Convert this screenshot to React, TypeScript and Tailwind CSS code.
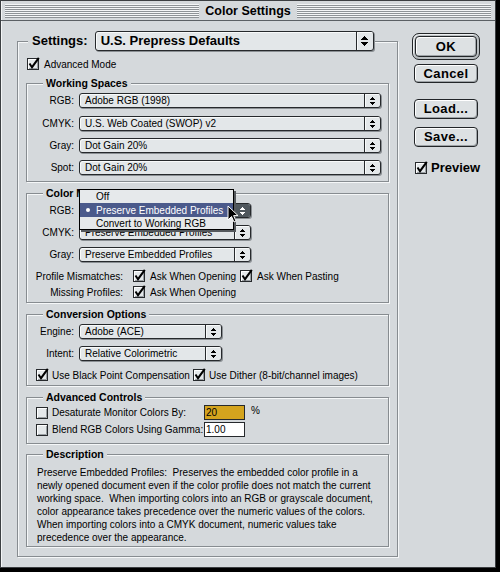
import React from "react";

// Mac OS 9 "Color Settings" dialog

function Arrows({ big = false, inverted = false }: { big?: boolean; inverted?: boolean }) {
  const c = inverted ? "#ffffff" : "#000000";
  if (big) {
    return (
      <svg width="7" height="10" viewBox="0 0 7 10" shapeRendering="crispEdges">
        <rect x="3" y="0" width="1" height="1" fill={c} />
        <rect x="2" y="1" width="3" height="1" fill={c} />
        <rect x="1" y="2" width="5" height="1" fill={c} />
        <rect x="0" y="3" width="7" height="1" fill={c} />
        <rect x="0" y="6" width="7" height="1" fill={c} />
        <rect x="1" y="7" width="5" height="1" fill={c} />
        <rect x="2" y="8" width="3" height="1" fill={c} />
        <rect x="3" y="9" width="1" height="1" fill={c} />
      </svg>
    );
  }
  return (
    <svg width="5" height="8" viewBox="0 0 5 8" shapeRendering="crispEdges">
      <rect x="2" y="0" width="1" height="1" fill={c} />
      <rect x="1" y="1" width="3" height="1" fill={c} />
      <rect x="0" y="2" width="5" height="1" fill={c} />
      <rect x="0" y="5" width="5" height="1" fill={c} />
      <rect x="1" y="6" width="3" height="1" fill={c} />
      <rect x="2" y="7" width="1" height="1" fill={c} />
    </svg>
  );
}

function Popup({
  text,
  className,
  big = false,
  pressed = false,
}: {
  text: string;
  className: string;
  big?: boolean;
  pressed?: boolean;
}) {
  return (
    <div
      className={`flex shrink-0 rounded-[3px] border border-[#26292c] bg-[#e3e7e9] shadow-[1px_1px_0_#8a8f93,inset_1px_1px_0_#f8fafa] ${className}`}
    >
      <div
        className={`flex-1 flex items-center whitespace-nowrap overflow-hidden ${
          big ? "pl-[5px] text-[13px] font-bold" : "pl-[5px] text-[10px]"
        }`}
      >
        {text}
      </div>
      <div
        className={`flex items-center justify-center border-l border-[#26292c] rounded-r-[2px] ${
          big ? "w-[17px]" : "w-[16px]"
        } ${pressed ? "bg-[#4f575d]" : "shadow-[inset_1px_1px_0_#f8fafa]"}`}
      >
        <Arrows big={big} inverted={pressed} />
      </div>
    </div>
  );
}

function Check({ checked = false }: { checked?: boolean }) {
  return (
    <svg width="14" height="14" viewBox="0 0 14 14" className="shrink-0">
      <rect x="0.5" y="1.5" width="11" height="11" fill="#e4e8ea" stroke="#26292c" />
      <path d="M1.5 12 V2.5 H10.5" stroke="#ffffff" fill="none" />
      <path d="M10.5 3 V11.5 H2" stroke="#9a9fa3" fill="none" />
      {checked && (
        <path d="M2.5 6.5 L5 10.2 L11.8 0.8" stroke="#000000" strokeWidth="2" fill="none" />
      )}
    </svg>
  );
}

function Group({
  label,
  className,
  children,
}: {
  label: string;
  className: string;
  children: React.ReactNode;
}) {
  return (
    <div
      className={`relative flex flex-col w-[363px] shrink-0 border border-[#878c90] shadow-[inset_1px_1px_0_#f5f7f8,1px_1px_0_#f5f7f8] ${className}`}
    >
      <div className="-mt-[7px] ml-[16px] self-start h-[13px] px-[3px] bg-[#d5d9dc] text-[10.5px] font-bold leading-[13px] whitespace-nowrap">
        {label}
      </div>
      {children}
    </div>
  );
}

function Row({ label, children, className = "" }: { label: string; children: React.ReactNode; className?: string }) {
  return (
    <div className={`flex items-center h-[15px] ${className}`}>
      <div className="w-[47px] mr-[5px] text-right text-[10px] whitespace-nowrap">{label}</div>
      {children}
    </div>
  );
}

function Button({ label, className = "" }: { label: string; className?: string }) {
  return (
    <div
      className={`flex items-center justify-center rounded-[4px] border border-[#222528] bg-[#dde1e3] shadow-[inset_1px_1px_0_#ffffff,inset_-1px_-1px_0_#9ea3a7] text-[13px] font-bold tracking-[0.4px] ${className}`}
    >
      {label}
    </div>
  );
}

function Cursor() {
  return (
    <svg width="12" height="19" viewBox="0 0 12 19" className="absolute left-[148px] top-[2px] z-20">
      <path
        d="M1 1 L1 15 L4.5 11.5 L7 17 L9 16 L6.6 10.6 L11 10.6 Z"
        fill="#000000"
        stroke="#ffffff"
        strokeWidth="1"
        strokeLinejoin="miter"
      />
    </svg>
  );
}

export default function App() {
  const description = [
    "Preserve Embedded Profiles:  Preserves the embedded color profile in a",
    "newly opened document even if the color profile does not match the current",
    "working space.  When importing colors into an RGB or grayscale document,",
    "color appearance takes precedence over the numeric values of the colors.",
    "When importing colors into a CMYK document, numeric values take",
    "precedence over the appearance.",
  ];

  return (
    <div className="w-[500px] h-[572px] bg-black font-['Liberation_Sans',Arial,sans-serif] text-black">
      <div className="w-[496px] h-[568px] flex flex-col border border-[#3c3f42] bg-[#d5d9dc] shadow-[inset_1px_0_0_#f3f5f6]">
        {/* Title bar */}
        <div className="h-[20px] shrink-0 flex items-center px-[4px] py-[3px] border-b border-[#5b6064]">
          <div className="flex-1 h-[14px] bg-[repeating-linear-gradient(to_bottom,#f4f6f7_0px,#f4f6f7_1px,#8e9397_1px,#8e9397_2px)]" />
          <div className="px-[6px] text-[12.5px] font-bold leading-[14px]">Color Settings</div>
          <div className="flex-1 h-[14px] bg-[repeating-linear-gradient(to_bottom,#f4f6f7_0px,#f4f6f7_1px,#8e9397_1px,#8e9397_2px)]" />
        </div>

        <div className="flex">
          {/* Main settings group */}
          <div className="mt-[20px] ml-[16px] w-[381px] h-[516px] flex flex-col pl-[8px] border border-[#878c90] shadow-[inset_1px_1px_0_#f5f7f8,1px_1px_0_#f5f7f8]">
            <div className="-mt-[11px] ml-[2px] self-start flex items-center h-[20px] pl-[4px] bg-[#d5d9dc]">
              <span className="text-[13px] font-bold mr-[7px]">Settings:</span>
              <Popup big text="U.S. Prepress Defaults" className="w-[279px] h-[20px]" />
            </div>

            <div className="mt-[6px] ml-[1px] flex items-center h-[14px] gap-[3px]">
              <Check checked />
              <span className="text-[10px]">Advanced Mode</span>
            </div>

            <Group label="Working Spaces" className="mt-[12px] h-[99px]">
              <Row label="RGB:" className="mt-[3px]">
                <Popup text="Adobe RGB (1998)" className="w-[302px] h-[15px]" />
              </Row>
              <Row label="CMYK:" className="mt-[8px]">
                <Popup text="U.S. Web Coated (SWOP) v2" className="w-[302px] h-[15px]" />
              </Row>
              <Row label="Gray:" className="mt-[7px]">
                <Popup text="Dot Gain 20%" className="w-[302px] h-[15px]" />
              </Row>
              <Row label="Spot:" className="mt-[7px]">
                <Popup text="Dot Gain 20%" className="w-[302px] h-[15px]" />
              </Row>
            </Group>

            <Group label="Color Management Policies" className="mt-[11px] h-[110px]">
              <Row label="RGB:" className="mt-[3px]">
                <div className="relative">
                  <Popup pressed text="" className="w-[172px] h-[15px]" />
                  {/* open menu */}
                  <div className="absolute left-0 -top-[14px] z-10 w-[155px] h-[41px] flex flex-col border border-black bg-[#e6e9eb] shadow-[2px_2px_0_#55595d] text-[10px]">
                    <div className="h-[13px] pl-[16px] flex items-center">Off</div>
                    <div className="h-[14px] flex items-center bg-[#4b5a8b] text-white">
                      <span className="w-[16px] flex justify-center">
                        <span className="w-[4px] h-[4px] rounded-full bg-white" />
                      </span>
                      Preserve Embedded Profiles
                    </div>
                    <div className="h-[12px] pl-[16px] flex items-center">Convert to Working RGB</div>
                  </div>
                  <Cursor />
                </div>
              </Row>
              <Row label="CMYK:" className="mt-[7px]">
                <Popup text="Preserve Embedded Profiles" className="w-[172px] h-[15px]" />
              </Row>
              <Row label="Gray:" className="mt-[7px]">
                <Popup text="Preserve Embedded Profiles" className="w-[172px] h-[15px]" />
              </Row>
              <div className="mt-[7px] flex items-center h-[14px] text-[10px]">
                <div className="w-[96px] text-right mr-[10px] whitespace-nowrap">Profile Mismatches:</div>
                <Check checked />
                <span className="ml-[3px] w-[90px]">Ask When Opening</span>
                <Check checked />
                <span className="ml-[3px]">Ask When Pasting</span>
              </div>
              <div className="mt-[2px] flex items-center h-[14px] text-[10px]">
                <div className="w-[96px] text-right mr-[10px] whitespace-nowrap">Missing Profiles:</div>
                <Check checked />
                <span className="ml-[3px]">Ask When Opening</span>
              </div>
            </Group>

            <Group label="Conversion Options" className="mt-[11px] h-[72px]">
              <Row label="Engine:" className="mt-[3px]">
                <Popup text="Adobe (ACE)" className="w-[143px] h-[15px]" />
              </Row>
              <Row label="Intent:" className="mt-[7px]">
                <Popup text="Relative Colorimetric" className="w-[143px] h-[15px]" />
              </Row>
              <div className="mt-[7px] ml-[9px] flex items-center h-[14px] text-[10px]">
                <Check checked />
                <span className="ml-[2px] w-[141px]">Use Black Point Compensation</span>
                <Check checked />
                <span className="ml-[2px]">Use Dither (8-bit/channel images)</span>
              </div>
            </Group>

            <Group label="Advanced Controls" className="mt-[11px] h-[47px]">
              <div className="mt-[1px] ml-[9px] flex items-center h-[15px] text-[10px]">
                <Check />
                <span className="ml-[2px] w-[152px]">Desaturate Monitor Colors By:</span>
                <div className="w-[41px] h-[15px] border border-[#26292c] bg-[#d4a41e] pl-[1px] flex items-center">20</div>
                <span className="ml-[6px] -mt-[5px]">%</span>
              </div>
              <div className="mt-[2px] ml-[9px] flex items-center h-[15px] text-[10px]">
                <Check />
                <span className="ml-[2px] w-[152px]">Blend RGB Colors Using Gamma:</span>
                <div className="w-[41px] h-[15px] border border-[#26292c] bg-white pl-[1px] flex items-center">1.00</div>
              </div>
            </Group>

            <Group label="Description" className="mt-[10px] h-[93px]">
              <div className="mt-[5px] pl-[10px] text-[10px] leading-[13px]">
                {description.map((line) => (
                  <div key={line} className="whitespace-pre">
                    {line}
                  </div>
                ))}
              </div>
            </Group>
          </div>

          {/* Buttons */}
          <div className="ml-[14px] mt-[12px] flex flex-col">
            <div className="w-[68px] h-[27px] rounded-[7px] border border-[#222528] bg-[#b9bec1] p-[2px] shadow-[inset_1px_1px_0_#eef0f1]">
              <Button label="OK" className="w-full h-full" />
            </div>
            <Button label="Cancel" className="mt-[4px] ml-[2px] w-[64px] h-[19px]" />
            <Button label="Load..." className="mt-[16px] ml-[2px] w-[64px] h-[20px]" />
            <Button label="Save..." className="mt-[8px] ml-[2px] w-[64px] h-[20px]" />
            <div className="mt-[14px] ml-[3px] flex items-center h-[14px] gap-[2px]">
              <Check checked />
              <span className="text-[13px] font-bold">Preview</span>
            </div>
          </div>
        </div>
      </div>
    </div>
  );
}
